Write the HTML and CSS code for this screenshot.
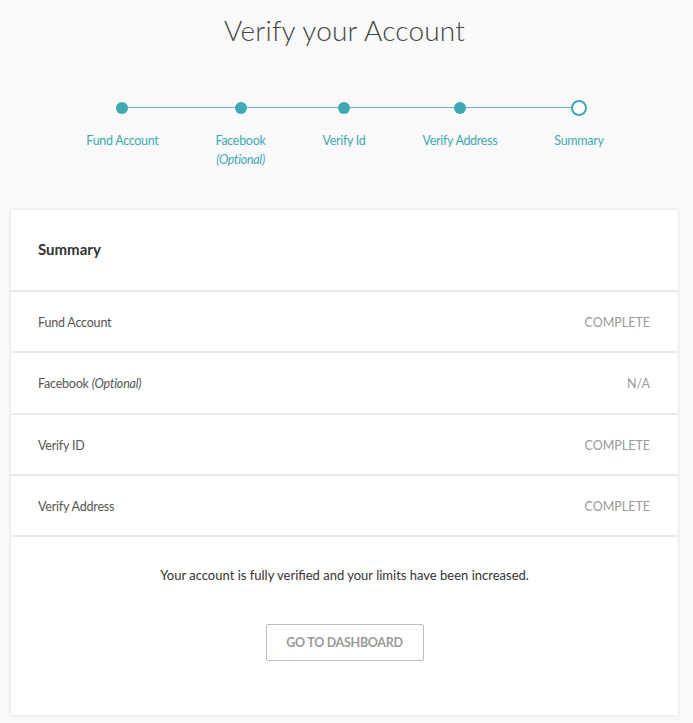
FILE: index.html
```html
<!DOCTYPE html>
<html>
<head>
<meta charset="utf-8">
<link rel="stylesheet" href="styles.css">
</head>
<body>
<div class="page">
  <h1 class="title">Verify your Account</h1>
  <div class="steps">
    <div class="step first"><div class="track"><span class="dot"></span></div><div class="label">Fund Account</div></div>
    <div class="step"><div class="track"><span class="dot"></span></div><div class="label">Facebook<br><em>(Optional)</em></div></div>
    <div class="step"><div class="track"><span class="dot"></span></div><div class="label">Verify Id</div></div>
    <div class="step"><div class="track"><span class="dot"></span></div><div class="label">Verify Address</div></div>
    <div class="step last"><div class="track"><span class="dot open"></span></div><div class="label">Summary</div></div>
  </div>
  <div class="card">
    <div class="card-head">Summary</div>
    <div class="row"><span class="name">Fund Account</span><span class="status">COMPLETE</span></div>
    <div class="row"><span class="name">Facebook <em>(Optional)</em></span><span class="status">N/A</span></div>
    <div class="row"><span class="name">Verify ID</span><span class="status">COMPLETE</span></div>
    <div class="row"><span class="name">Verify Address</span><span class="status">COMPLETE</span></div>
    <div class="card-foot">
      <p class="msg">Your account is fully verified and your limits have been increased.</p>
      <button class="btn">GO TO DASHBOARD</button>
    </div>
  </div>
</div>
</body>
</html>
```

FILE: styles.css
```css
* { box-sizing: border-box; }
html, body { margin: 0; padding: 0; background: #f9f9f9; }
body { font-family: Lato, "Open Sans", sans-serif; color: #444; }
.page { padding: 11px 15px 8px 11px; }
.title {
  margin: 0;
  text-align: center;
  font-weight: 300;
  font-size: 28px;
  line-height: 38px;
  color: #444;
  letter-spacing: 0.2px;
}
.steps {
  display: flex;
  justify-content: center;
  margin-top: 51px;
  margin-left: 1px;
}
.step { text-align: center; }
.track {
  height: 16px;
  display: flex;
  justify-content: center;
  align-items: center;
  position: relative;
}
.track::before, .track::after {
  content: "";
  position: absolute;
  top: 7px;
  height: 1px;
  background: #6eb7bd;
}
.track::before { left: 0; right: 50%; }
.track::after { left: 50%; right: 0; }
.first .track::before { display: none; }
.last .track::after { display: none; }
.dot {
  width: 12px; height: 12px; border-radius: 50%;
  background: #3ea9b3; position: relative; z-index: 1;
}
.dot.open { width: 16px; height: 16px; background: #fff; border: 2px solid #3ea9b3; }
.label {
  padding: 0 28.5px;
  margin-top: 15px;
  font-size: 12.5px;
  line-height: 19px;
  color: #3ea9b3;
  white-space: nowrap;
  letter-spacing: -0.3px;
}
.label em { font-style: italic; }
.card {
  margin-top: 41px;
  background: #fff;
  box-shadow: 0 0 3px rgba(0,0,0,0.15);
  width: 667px;
}
.card-head {
  height: 82px;
  padding: 0 27px 3px;
  display: flex;
  align-items: center;
  font-weight: 700;
  font-size: 15px;
  color: #333;
  border-bottom: 2px solid #e9e9e9;
}
.row {
  height: 61.3px;
  padding: 2px 28px 0 27px;
  display: flex;
  justify-content: space-between;
  align-items: center;
  border-bottom: 2px solid #e9e9e9;
  font-size: 12.5px;
  letter-spacing: -0.2px;
}
.name { color: #555; }
.name em { font-style: italic; }
.status { color: #9a9a9a; letter-spacing: 0; font-size: 12.5px; }
.card-foot {
  height: 178px;
  display: flex;
  flex-direction: column;
  align-items: center;
  padding-top: 29px;
}
.msg {
  margin: 0;
  font-size: 13px;
  color: #333;
  line-height: 18px;
}
.btn {
  margin-top: 40px;
  width: 158px;
  height: 37px;
  background: #fff;
  border: 1px solid #bdbdbd;
  border-radius: 2px;
  color: #999;
  font-family: Lato, sans-serif;
  font-weight: 700;
  font-size: 12.5px;
  letter-spacing: -0.3px;
}
```
